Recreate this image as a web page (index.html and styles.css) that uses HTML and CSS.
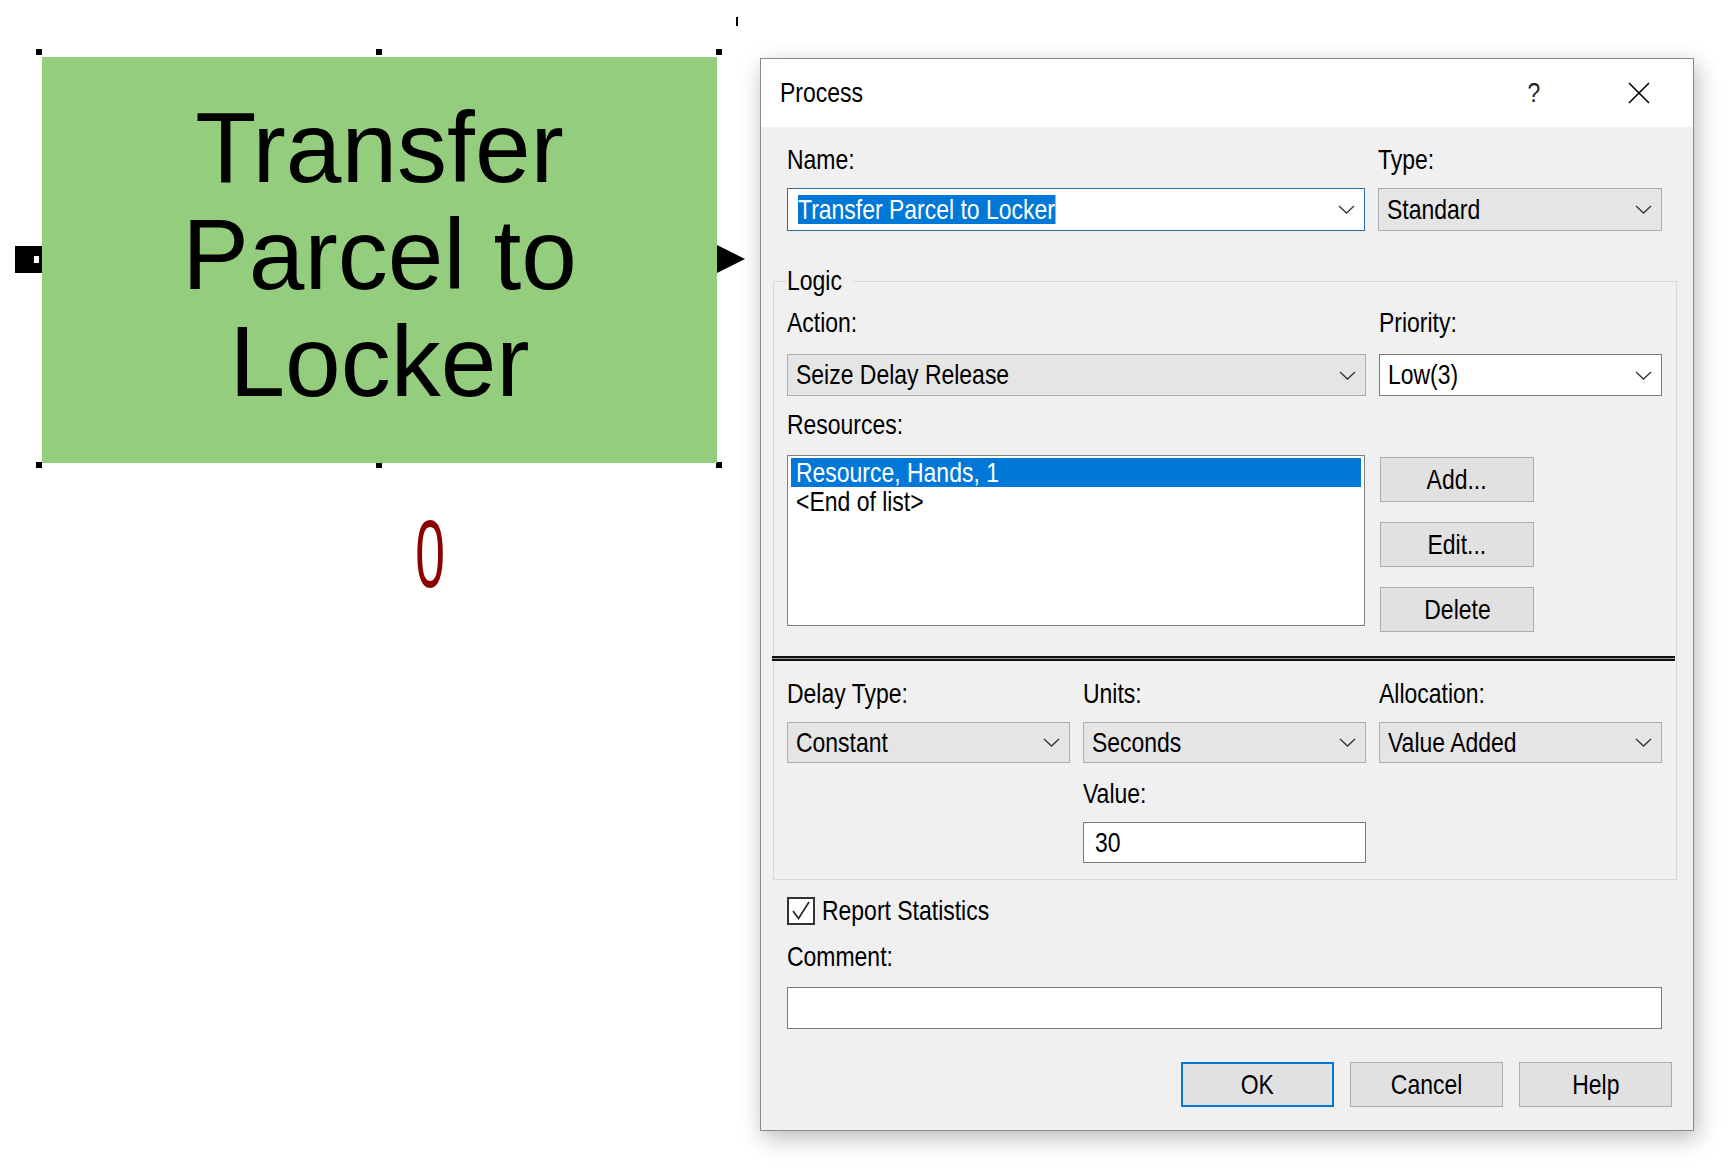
FILE: index.html
```html
<!DOCTYPE html>
<html>
<head>
<meta charset="utf-8">
<title>Process</title>
<link rel="stylesheet" href="styles.css">
</head>
<body>
<div class="page">
  <div class="canvas">
    <div class="tick"></div>
    <div class="handle h1"></div>
    <div class="handle h2"></div>
    <div class="handle h3"></div>
    <div class="handle h4"></div>
    <div class="handle h5"></div>
    <div class="handle h6"></div>
    <div class="port-in"></div>
    <div class="block"><span>Transfer<br>Parcel to<br>Locker</span></div>
    <div class="port-out"></div>
    <div class="counter">0</div>
  </div>

  <div class="dialog">
    <div class="titlebar">
      <span class="title">Process</span>
      <span class="help">?</span>
      <svg class="close" viewBox="0 0 22 22"><path d="M1 1 L21 21 M21 1 L1 21" stroke="#000" stroke-width="1.6" fill="none"/></svg>
    </div>
    <div class="body">
      <div class="row-top">
        <div class="field">
          <div class="lbl">Name:</div>
          <div class="combo focus"><span class="sel">Transfer Parcel to Locker</span><svg class="chev" viewBox="0 0 17 9"><path d="M1 1 L8.5 8 L16 1" stroke="#333" stroke-width="1.3" fill="none"/></svg></div>
        </div>
        <div class="field">
          <div class="lbl">Type:</div>
          <div class="combo"><span>Standard</span><svg class="chev" viewBox="0 0 17 9"><path d="M1 1 L8.5 8 L16 1" stroke="#333" stroke-width="1.3" fill="none"/></svg></div>
        </div>
      </div>

      <fieldset class="group">
        <legend><span class="n">Logic</span></legend>
        <div class="row3 act-row">
          <div class="field span2">
            <div class="lbl">Action:</div>
            <div class="combo"><span>Seize Delay Release</span><svg class="chev" viewBox="0 0 17 9"><path d="M1 1 L8.5 8 L16 1" stroke="#333" stroke-width="1.3" fill="none"/></svg></div>
          </div>
          <div class="field">
            <div class="lbl">Priority:</div>
            <div class="combo white"><span>Low(3)</span><svg class="chev" viewBox="0 0 17 9"><path d="M1 1 L8.5 8 L16 1" stroke="#333" stroke-width="1.3" fill="none"/></svg></div>
          </div>
        </div>
        <div class="lbl res-lbl">Resources:</div>
        <div class="res-row">
          <div class="listbox">
            <div class="item on"><span class="n">Resource, Hands, 1</span></div>
            <div class="item"><span class="n">&lt;End of list&gt;</span></div>
          </div>
          <div class="btn-col">
            <div class="btn"><span class="n">Add...</span></div>
            <div class="btn"><span class="n">Edit...</span></div>
            <div class="btn"><span class="n">Delete</span></div>
          </div>
        </div>
        <div class="dbl"></div>
        <div class="row3 delay-row">
          <div class="field">
            <div class="lbl">Delay Type:</div>
            <div class="combo"><span>Constant</span><svg class="chev" viewBox="0 0 17 9"><path d="M1 1 L8.5 8 L16 1" stroke="#333" stroke-width="1.3" fill="none"/></svg></div>
          </div>
          <div class="field">
            <div class="lbl">Units:</div>
            <div class="combo"><span>Seconds</span><svg class="chev" viewBox="0 0 17 9"><path d="M1 1 L8.5 8 L16 1" stroke="#333" stroke-width="1.3" fill="none"/></svg></div>
          </div>
          <div class="field">
            <div class="lbl">Allocation:</div>
            <div class="combo"><span>Value Added</span><svg class="chev" viewBox="0 0 17 9"><path d="M1 1 L8.5 8 L16 1" stroke="#333" stroke-width="1.3" fill="none"/></svg></div>
          </div>
        </div>
        <div class="row3 value-row">
          <div class="field col2">
            <div class="lbl">Value:</div>
            <div class="input"><span class="n">30</span></div>
          </div>
        </div>
      </fieldset>

      <div class="check-row">
        <div class="cb"><svg viewBox="0 0 24 24"><path d="M4 12 L9.5 19.5 L20 3" stroke="#222" stroke-width="1.6" fill="none"/></svg></div>
        <span class="lbl">Report Statistics</span>
      </div>
      <div class="lbl comment-lbl">Comment:</div>
      <div class="input comment"></div>
      <div class="buttons">
        <div class="btn default"><span class="n">OK</span></div>
        <div class="btn"><span class="n">Cancel</span></div>
        <div class="btn"><span class="n">Help</span></div>
      </div>
    </div>
  </div>
</div>
</body>
</html>
```
FILE: styles.css
```css
* { box-sizing: border-box; }
html, body { margin: 0; padding: 0; background: #fff; }
body {
  font-family: "Liberation Sans", Arial, sans-serif;
  font-size: 28px;
  color: #000;
}
.page {
  display: flex;
  align-items: flex-start;
  width: 1730px;
  height: 1170px;
  overflow: hidden;
}

/* ---------- model canvas ---------- */
.canvas {
  position: relative;
  flex: none;
  width: 760px;
  height: 1170px;
}
.block {
  position: absolute;
  left: 42px;
  top: 57px;
  width: 675px;
  height: 406px;
  background: #95cd7f;
  display: flex;
  align-items: center;
  justify-content: center;
  text-align: center;
  font-size: 100px;
  line-height: 107px;
  padding-bottom: 12px;
}
.handle { position: absolute; width: 6px; height: 6px; background: #000; }
.h1 { left: 36px; top: 49px; }
.h2 { left: 376px; top: 49px; }
.h3 { left: 716px; top: 49px; }
.h4 { left: 36px; top: 462px; }
.h5 { left: 376px; top: 462px; }
.h6 { left: 716px; top: 462px; }
.tick { position: absolute; left: 736px; top: 17px; width: 2px; height: 9px; background: #000; }
.port-in {
  position: absolute;
  left: 15px;
  top: 246px;
  width: 28px;
  height: 27px;
  background: #000;
}
.port-in::after {
  content: "";
  position: absolute;
  left: 19px;
  top: 10px;
  width: 5px;
  height: 7px;
  background: #fff;
}
.port-out {
  position: absolute;
  left: 717px;
  top: 245px;
  width: 0;
  height: 0;
  border-left: 28px solid #000;
  border-top: 14.5px solid transparent;
  border-bottom: 14.5px solid transparent;
}
.counter {
  position: absolute;
  left: 400px;
  top: 505px;
  width: 60px;
  text-align: center;
  font-size: 97px;
  line-height: 97px;
  color: #8b0000;
  transform: scaleX(0.55);
}

/* ---------- dialog ---------- */
/* the dialog font is a narrow sans: Liberation Sans squeezed to Arial Narrow proportions */
.n,
.lbl,
.title,
.combo > span {
  display: inline-block;
  white-space: nowrap;
  transform: scaleX(0.82);
  transform-origin: left center;
}
.btn .n { transform-origin: center center; }

.dialog {
  flex: none;
  margin-top: 58px;
  width: 934px;
  height: 1073px;
  border: 1px solid #8a8a8a;
  background: #f0f0f0;
  box-shadow: 3px 7px 22px rgba(0, 0, 0, 0.28);
  display: flex;
  flex-direction: column;
}
.titlebar {
  flex: none;
  height: 68px;
  background: #fff;
  display: flex;
  align-items: center;
  padding: 0 43px 0 19px;
  line-height: 32px;
}
.title { flex: 1; }
.help { margin-right: 86px; color: #222; transform: scaleX(0.82); }
.close { width: 22px; height: 22px; flex: none; }

.body { padding: 17px 16px 23px 12px; }
.lbl { display: block; height: 32px; line-height: 32px; }

.row-top {
  display: grid;
  grid-template-columns: 578px 284px;
  column-gap: 13px;
  margin: 0 15px 0 14px;
}
.row-top .lbl { margin-bottom: 12px; }

.combo {
  display: flex;
  align-items: center;
  justify-content: space-between;
  height: 43px;
  border: 1px solid #adadad;
  background: #e5e5e5;
  padding: 0 9px 0 8px;
  line-height: 32px;
  white-space: nowrap;
}
.combo.white { background: #fff; border-color: #7a7a7a; }
.combo.focus { background: #fff; border-color: #2e6da4; padding-left: 10px; }
.combo > span.sel { background: #0078d7; color: #fff; line-height: 29px; padding-right: 1px; }
.chev { width: 17px; height: 9px; flex: none; }

.group {
  margin: 31px 0 0;
  padding: 0 14px 16px 13px;
  border: 1px solid #d7d7d7;
  min-width: 0;
}
.group legend { padding: 0; height: 38px; line-height: 38px; }

.row3 {
  display: grid;
  grid-template-columns: 283px 283px 283px;
  column-gap: 13px;
}
.span2 { grid-column: span 2; }
.col2 { grid-column: 2; }
.act-row { margin-top: 7px; }
.act-row .lbl { margin-bottom: 15px; }
.act-row .combo { height: 42px; }
.res-lbl { margin-top: 13px; }
.res-row { display: flex; align-items: flex-start; height: 171px; margin-top: 14px; }
.listbox {
  flex: none;
  width: 578px;
  height: 171px;
  border: 1px solid #828282;
  background: #fff;
  padding: 2px 3px;
  margin-right: 15px;
}
.item { height: 29px; line-height: 29px; padding-left: 5px; white-space: nowrap; }
.item.on { background: #0078d7; color: #fff; }
.btn-col { display: flex; flex-direction: column; gap: 20px; padding-top: 2px; }
.btn {
  width: 154px;
  height: 45px;
  border: 1px solid #adadad;
  background: #e1e1e1;
  display: flex;
  align-items: center;
  justify-content: center;
  line-height: 32px;
}
.dbl {
  margin: 30px -13px 17px -15px;
  height: 5px;
  border-top: 2px solid #111;
  border-bottom: 2px solid #111;
  background: #9a9a9a;
}
.delay-row .lbl { margin-bottom: 12px; }
.delay-row .combo { height: 41px; }
.value-row { margin-top: 15px; }
.value-row .lbl { margin-bottom: 12px; }
.input {
  height: 41px;
  border: 1px solid #7a7a7a;
  background: #fff;
  padding-left: 11px;
  display: flex;
  align-items: center;
  line-height: 32px;
}

.check-row {
  display: flex;
  align-items: center;
  height: 28px;
  margin: 17px 0 0 14px;
  gap: 7px;
}
.check-row .lbl { display: inline-block; }
.cb { width: 28px; height: 28px; border: 2px solid #333; background: #fff; flex: none; }
.cb svg { display: block; width: 24px; height: 24px; }
.comment-lbl { margin: 16px 0 0 14px; }
.comment { margin: 14px 15px 0 14px; height: 42px; }
.buttons {
  display: flex;
  justify-content: flex-end;
  gap: 16px;
  margin: 33px 5px 0 0;
}
.buttons .btn { width: 153px; height: 45px; }
.btn.default { border: 2px solid #0078d7; }
```
